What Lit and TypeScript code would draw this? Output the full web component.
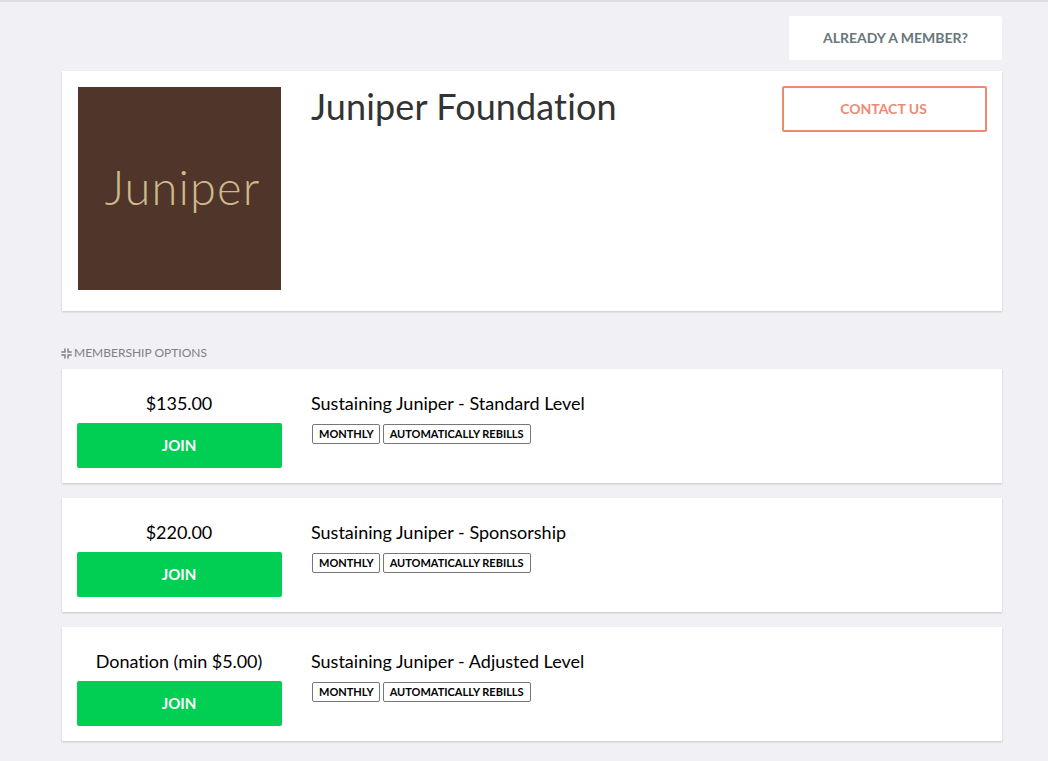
import { LitElement, html, css } from "lit";
import { customElement } from "lit/decorators.js";

const plans = [
  { price: "$135.00", name: "Sustaining Juniper - Standard Level" },
  { price: "$220.00", name: "Sustaining Juniper - Sponsorship" },
  { price: "Donation (min $5.00)", name: "Sustaining Juniper - Adjusted Level" },
];

@customElement("app-root")
export class AppRoot extends LitElement {
  static styles = css`
    :host {
      display: block;
      min-height: 761px;
      background: #f0f0f5;
      font-family: Lato, "Liberation Sans", sans-serif;
      box-sizing: border-box;
      border-top: 2px solid #dcdce2;
      overflow: hidden;
    }
    .page {
      width: 940px;
      margin-left: 62px;
      padding-top: 14px;
      display: flex;
      flex-direction: column;
    }
    .top {
      display: flex;
      justify-content: flex-end;
      margin-bottom: 11px;
    }
    .member {
      width: 213px;
      height: 44px;
      box-sizing: border-box;
      padding-bottom: 2px;
      background: #fff;
      border-radius: 2px;
      display: flex;
      align-items: center;
      justify-content: center;
      color: #68767b;
      font-size: 14px;
      font-weight: 700;
    }
    .card {
      background: #fff;
      box-shadow: 0 1px 2px rgba(0, 0, 0, 0.18);
    }
    .header {
      height: 240px;
      box-sizing: border-box;
      padding: 16px 15px 16px 16px;
      display: flex;
      align-items: flex-start;
    }
    .logo {
      width: 203px;
      height: 203px;
      box-sizing: border-box;
      padding: 0 0 3px 6px;
      background: #50362a;
      color: #cdb98b;
      font-size: 47px;
      font-weight: 300;
      letter-spacing: 1.1px;
      display: flex;
      align-items: center;
      justify-content: center;
      flex: none;
    }
    h1 {
      margin: -1px 0 0 30px;
      flex: 1;
      font-size: 36px;
      line-height: 40px;
      font-weight: 400;
      letter-spacing: 0.12px;
      color: #333;
    }
    .contact {
      width: 205px;
      height: 46px;
      margin-top: -1px;
      box-sizing: border-box;
      padding: 0 2px 2px 0;
      border: 2px solid #ec8a75;
      border-radius: 2px;
      color: #ec8a75;
      font-size: 14px;
      font-weight: 700;
      display: flex;
      align-items: center;
      justify-content: center;
    }
    .label {
      margin: 34px 0 9px -1px;
      height: 15px;
      display: flex;
      align-items: center;
      gap: 1px;
      font-size: 12px;
      color: #808085;
    }
    .label svg {
      width: 12px;
      height: 12px;
    }
    .list {
      display: flex;
      flex-direction: column;
      gap: 15px;
    }
    .plan {
      height: 114px;
      box-sizing: border-box;
      padding: 22px 15px 0;
      display: flex;
    }
    .left {
      width: 205px;
      flex: none;
      display: flex;
      flex-direction: column;
    }
    .price {
      height: 32px;
      padding-right: 1px;
      text-align: center;
      font-size: 18px;
      line-height: 24px;
      letter-spacing: -0.05px;
      color: #000;
    }
    .join {
      height: 45px;
      box-sizing: border-box;
      padding: 0 1px 2px 0;
      background: #00cf53;
      border-radius: 2px;
      color: #fff;
      font-size: 15px;
      font-weight: 700;
      display: flex;
      align-items: center;
      justify-content: center;
    }
    .right {
      margin-left: 29px;
    }
    .name {
      font-size: 18px;
      line-height: 24px;
      color: #000;
    }
    .tags {
      display: flex;
      gap: 3px;
      margin: 9px 0 0 1px;
    }
    .tag {
      height: 20px;
      box-sizing: border-box;
      padding: 0 5px 1px 6px;
      border: 1px solid #777;
      border-radius: 2px;
      font-size: 11px;
      font-weight: 700;
      color: #000;
      display: flex;
      align-items: center;
    }
    .tag + .tag {
      padding-right: 6px;
    }
  `;

  render() {
    return html`
      <div class="page">
        <div class="top"><div class="member">ALREADY A MEMBER?</div></div>
        <div class="card header">
          <div class="logo">Juniper</div>
          <h1>Juniper Foundation</h1>
          <div class="contact">CONTACT US</div>
        </div>
        <div class="label">
          <svg viewBox="0 0 12 12" fill="none" stroke="#808085" stroke-width="1.5">
            <path d="M0.3 5H3.95V1.5M7.05 1.5V5H10.7M10.7 8H7.05V11.5M3.95 11.5V8H0.3" />
          </svg>
          MEMBERSHIP OPTIONS
        </div>
        <div class="list">
          ${plans.map(
            (p) => html`
              <div class="card plan">
                <div class="left">
                  <div class="price">${p.price}</div>
                  <div class="join">JOIN</div>
                </div>
                <div class="right">
                  <div class="name">${p.name}</div>
                  <div class="tags">
                    <span class="tag">MONTHLY</span>
                    <span class="tag">AUTOMATICALLY REBILLS</span>
                  </div>
                </div>
              </div>
            `
          )}
        </div>
      </div>
    `;
  }
}
